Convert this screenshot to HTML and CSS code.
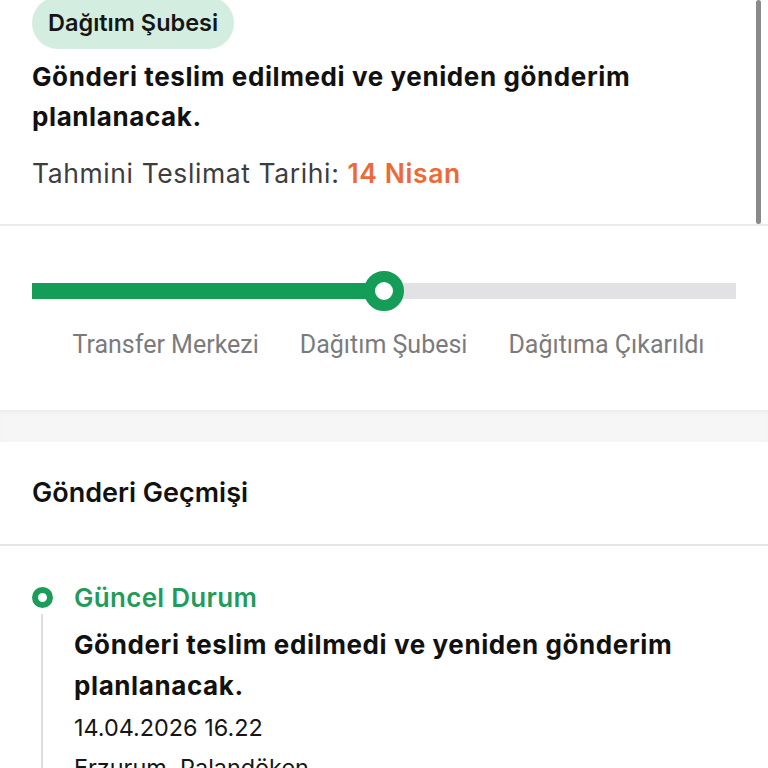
FILE: index.html
```html
<!DOCTYPE html>
<html lang="tr">
<head>
<meta charset="utf-8">
<link rel="stylesheet" href="styles.css">
</head>
<body>
<div class="page">
  <section class="summary">
    <div class="badge">Dağıtım Şubesi</div>
    <h1 class="title">Gönderi teslim edilmedi ve yeniden gönderim planlanacak.</h1>
    <p class="eta">Tahmini Teslimat Tarihi: <span class="eta-date">14 Nisan</span></p>
    <div class="scrollbar"></div>
  </section>
  <section class="progress">
    <div class="track">
      <div class="fill" style="width:50%"></div>
      <div class="knob" style="left:50%"></div>
    </div>
    <div class="steps">
      <span class="step">Transfer Merkezi</span>
      <span class="step">Dağıtım Şubesi</span>
      <span class="step">Dağıtıma Çıkarıldı</span>
    </div>
  </section>
  <div class="gap"></div>
  <section class="history">
    <h2 class="history-title">Gönderi Geçmişi</h2>
    <div class="timeline">
      <div class="event">
        <div class="rail">
          <span class="dot"></span>
          <span class="line"></span>
        </div>
        <div class="event-body">
          <div class="event-status">Güncel Durum</div>
          <div class="event-text">Gönderi teslim edilmedi ve yeniden gönderim planlanacak.</div>
          <div class="event-date">14.04.2026 16.22</div>
          <div class="event-place">Erzurum, Palandöken</div>
        </div>
      </div>
    </div>
  </section>
</div>
</body>
</html>
```
FILE: styles.css
```css
* { box-sizing: border-box; }
html, body { margin: 0; padding: 0; }
body {
  font-family: Inter, "Noto Sans", sans-serif;
  background: #ffffff;
  color: #111111;
  overflow: hidden;
  height: 768px;
}
.page { width: 768px; }
.summary {
  position: relative;
  padding: 0 32px 28px 32px;
  border-bottom: 2px solid #ececec;
  height: 226px;
}
.badge {
  display: inline-block;
  margin-top: -3px;
  background: #d3ede0;
  color: #151515;
  font-size: 23.5px;
  font-weight: 600;
  line-height: 52px;
  padding: 0 16px;
  border-radius: 26px;
}
.title {
  margin: 8px 0 0 0;
  font-size: 26px;
  font-weight: 700;
  letter-spacing: 0.6px;
  line-height: 40px;
  max-width: 660px;
  color: #111111;
}
.eta {
  margin: 18px 0 0 0;
  font-size: 26.5px;
  letter-spacing: 0.6px;
  line-height: 36px;
  color: #3d3d3d;
}
.eta-date { color: #ec6a38; font-weight: 600; }
.scrollbar {
  position: absolute;
  right: 7px;
  top: 0;
  width: 5px;
  height: 224px;
  background: #8a8a8a;
  border-radius: 3px;
}
.progress {
  padding: 57px 32px 0 32px;
  height: 184px;
}
.track {
  position: relative;
  height: 16px;
  background: #e2e2e4;
}
.fill {
  height: 100%;
  background: #149d57;
}
.knob {
  position: absolute;
  top: 50%;
  width: 40px;
  height: 40px;
  margin: -20px 0 0 -20px;
  border: 11px solid #149d57;
  background: #ffffff;
  border-radius: 50%;
}
.steps {
  display: flex;
  justify-content: center;
  gap: 41px;
  margin-top: 30px;
  padding-left: 9px;
}
.step {
  font-family: Roboto, "Noto Sans", sans-serif;
  font-size: 25px;
  color: #7b7b7d;
  line-height: 32px;
}
.gap {
  height: 32px;
  background: #f6f6f6;
  box-shadow: inset 0 4px 4px -2px #ebebeb;
}
.history-title {
  margin: 0;
  padding: 34px 32px 0 32px;
  height: 104px;
  font-size: 27px;
  font-weight: 600;
  line-height: 34px;
  border-bottom: 2px solid #e6e6e6;
  color: #111111;
}
.timeline { padding: 36px 32px 0 32px; }
.event { display: flex; gap: 22px; }
.rail {
  display: flex;
  flex-direction: column;
  align-items: center;
  width: 20px;
  padding-top: 5px;
}
.dot {
  width: 21px;
  height: 21px;
  border: 6px solid #1b9c58;
  border-radius: 50%;
}
.line {
  flex: 1;
  width: 2px;
  margin-top: 6px;
  background: #dddddd;
}
.event-status {
  font-size: 26px;
  font-weight: 600;
  letter-spacing: 0.3px;
  color: #1f9c5c;
  line-height: 32px;
}
.event-text {
  margin-top: 10px;
  font-size: 26px;
  font-weight: 700;
  letter-spacing: 0.6px;
  line-height: 41px;
  max-width: 680px;
}
.event-date, .event-place {
  margin-top: 4px;
  font-size: 23.4px;
  line-height: 36px;
  color: #161616;
}
```
